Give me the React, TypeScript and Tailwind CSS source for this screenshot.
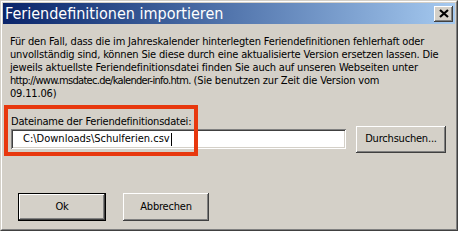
import React from 'react';

const font = { fontFamily: '"DejaVu Sans Condensed", "DejaVu Sans", sans-serif' };

function WinButton({ children, isDefault, className }: { children: React.ReactNode; isDefault?: boolean; className?: string }) {
    return (
        <div className={`${isDefault ? 'border border-black' : ''} ${className ?? ''}`}>
            <div className="flex h-full w-full items-center justify-center bg-[#d4d0c8] text-[11px] tracking-[-0.2px] text-black shadow-[inset_-1px_-1px_#404040,inset_1px_1px_#ffffff,inset_-2px_-2px_#808080,inset_2px_2px_#d4d0c8]">
                {children}
            </div>
        </div>
    );
}

export default function App() {
    return (
        <div className="h-[231px] w-[458px] border border-[#d4d0c8] border-r-[#404040] border-b-[#404040] [font-stretch:condensed]" style={font}>
            <div className="flex h-full flex-col border border-white border-r-[#808080] border-b-[#808080] bg-[#d4d0c8] p-px">
                {/* Titelleiste */}
                <div className="flex h-[21px] shrink-0 items-center justify-between bg-gradient-to-r from-[#0a246a] to-[#a6caf0] pl-[2px] pr-[2px]">
                    <span className="text-[16px] leading-none text-white">Feriendefinitionen importieren</span>
                    <div className="flex h-[16px] w-[19px] items-center justify-center bg-[#d4d0c8] shadow-[inset_-1px_-1px_#404040,inset_1px_1px_#ffffff,inset_-2px_-2px_#808080,inset_2px_2px_#d4d0c8]">
                        <svg width="10" height="9" viewBox="0 0 10 9">
                            <path d="M1 1 L9 8 M9 1 L1 8" stroke="#000" strokeWidth="2.2" />
                        </svg>
                    </div>
                </div>

                {/* Inhalt */}
                <div className="relative flex-1 px-[7px]">
                    <p className="mt-[11px] whitespace-nowrap text-[11px] leading-[13px] tracking-[-0.17px] text-black">
                        Für den Fall, dass die im Jahreskalender hinterlegten Feriendefinitionen fehlerhaft oder<br />
                        unvollständig sind, können Sie diese durch eine aktualisierte Version ersetzen lassen. Die<br />
                        jeweils aktuellste Feriendefinitionsdatei finden Sie auch auf unseren Webseiten unter<br />
                        <span className="tracking-[-0.7px]">http://www.msdatec.de/kalender-info.htm.</span> (Sie benutzen zur Zeit die Version vom<br />
                        09.11.06)
                    </p>

                    <div className="ml-px mt-[15px] flex items-start">
                        <div className="flex flex-col">
                            <label className="text-[11px] leading-[13px] tracking-[-0.2px] text-black">Dateiname der Feriendefinitionsdatei:</label>
                            <div className="mt-px flex h-[20px] w-[335px] items-center bg-white pl-[12px] text-[11px] text-black shadow-[inset_1px_1px_#808080,inset_-1px_-1px_#ffffff,inset_2px_2px_#404040,inset_-2px_-2px_#d4d0c8]">
                                C:\Downloads\Schulferien.csv
                                <span className="ml-px inline-block h-[13px] w-px bg-black" />
                            </div>
                        </div>
                        <WinButton className="ml-[10px] mt-[11px] h-[27px] w-[90px]">Durchsuchen...</WinButton>
                    </div>

                    <div className="ml-[8px] mt-[40px] flex gap-[17px]">
                        <WinButton isDefault className="h-[28px] w-[88px]">Ok</WinButton>
                        <WinButton className="h-[28px] w-[86px]">Abbrechen</WinButton>
                    </div>

                    {/* Markierung */}
                    <div className="absolute left-[1px] top-[81px] h-[51px] w-[194px] border-4 border-[#e8380e]" />
                </div>
            </div>
        </div>
    );
}
